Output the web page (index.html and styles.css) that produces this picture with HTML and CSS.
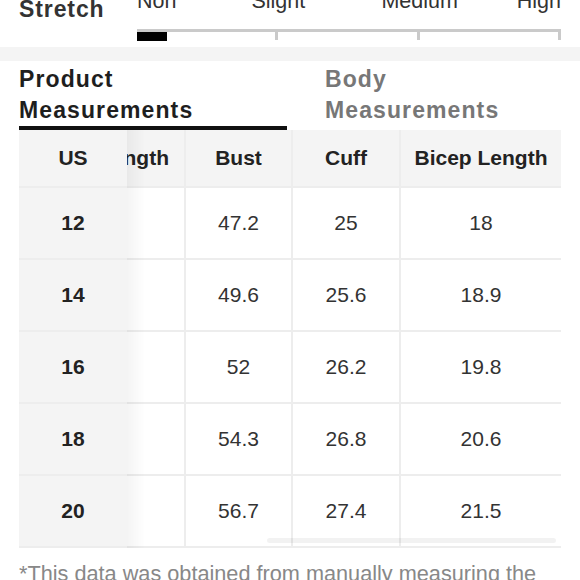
FILE: index.html
```html
<!DOCTYPE html>
<html lang="en">
<head>
<meta charset="utf-8">
<title>Size Guide</title>
<link rel="stylesheet" href="styles.css">
</head>
<body>
<div class="stretch">
  <div class="stretch-title">Stretch</div>
  <div class="scale">
    <div class="labels">
      <span class="label label-non">Non</span>
      <span class="label label-slight">Slight</span>
      <span class="label label-medium">Medium</span>
      <span class="label label-high">High</span>
    </div>
    <div class="track">
      <div class="seg"><div class="indicator"></div></div>
      <div class="seg"></div>
      <div class="seg"></div>
    </div>
  </div>
</div>
<div class="band"></div>
<div class="content">
  <div class="tabs">
    <div class="tab active">Product Measurements</div>
    <div class="tab">Body Measurements</div>
  </div>
  <div class="table-wrap">
    <div class="table-scroll">
      <table class="size-table">
        <colgroup>
          <col class="c-us"><col class="c-len"><col class="c-bust"><col class="c-cuff"><col class="c-bicep">
        </colgroup>
        <thead>
          <tr><th>US</th><th>Length</th><th class="ruled">Bust</th><th class="ruled">Cuff</th><th class="ruled">Bicep Length</th></tr>
        </thead>
        <tbody>
          <tr><td>12</td><td></td><td class="ruled">47.2</td><td class="ruled">25</td><td class="ruled">18</td></tr>
          <tr><td>14</td><td></td><td class="ruled">49.6</td><td class="ruled">25.6</td><td class="ruled">18.9</td></tr>
          <tr><td>16</td><td></td><td class="ruled">52</td><td class="ruled">26.2</td><td class="ruled">19.8</td></tr>
          <tr><td>18</td><td></td><td class="ruled">54.3</td><td class="ruled">26.8</td><td class="ruled">20.6</td></tr>
          <tr><td>20</td><td></td><td class="ruled">56.7</td><td class="ruled">27.4</td><td class="ruled">21.5</td></tr>
        </tbody>
      </table>
    </div>
    <div class="scroll-thumb"></div>
  </div>
  <p class="note">*This data was obtained from manually measuring the</p>
</div>
<script src="script.js"></script>
</body>
</html>
```

FILE: styles.css
```css
html, body {
  margin: 0;
  padding: 0;
}
body {
  width: 580px;
  height: 580px;
  overflow: hidden;
  background: #fff;
  font-family: "Liberation Sans", Arial, Helvetica, sans-serif;
  color: #222;
}

/* Stretch scale */
.stretch {
  display: flex;
  align-items: flex-start;
  padding: 0 19px;
  margin-top: -11px;
}
.stretch-title {
  width: 118px;
  margin-top: 7px;
  font-size: 23px;
  line-height: 27px;
  font-weight: 700;
  letter-spacing: 0.9px;
  color: #333;
}
.scale {
  width: 424px;
}
.labels {
  display: grid;
  grid-template-columns: repeat(6, 1fr);
  font-size: 21.5px;
  line-height: 24px;
  color: #333;
}
.label {
  white-space: nowrap;
}
.label-non { grid-column: 1; justify-self: start; }
.label-slight { grid-column: 2 / 4; justify-self: center; }
.label-medium { grid-column: 4 / 6; justify-self: center; }
.label-high { grid-column: 6; justify-self: end; }

.track {
  display: grid;
  grid-template-columns: repeat(3, 1fr);
  margin-top: 16px;
}
.seg {
  box-sizing: border-box;
  height: 11px;
  border-top: 3px solid #cacaca;
  border-right: 3px solid #cacaca;
}
.indicator {
  width: 30px;
  height: 9px;
  background: #000;
}

.band {
  height: 14px;
  margin-top: 7px;
  background: #f4f4f4;
}

/* Content */
.content {
  padding: 0 19px;
}
.tabs {
  display: grid;
  grid-template-columns: 268px 1fr;
  column-gap: 38px;
  margin-top: 3px;
}
.tab {
  font-size: 23px;
  line-height: 31px;
  font-weight: 700;
  letter-spacing: 1.1px;
  color: #777;
}
.tab.active {
  color: #1e1e1e;
  border-bottom: 4px solid #111;
}

.table-wrap {
  position: relative;
}
.table-scroll {
  overflow: hidden;
}
.size-table {
  table-layout: fixed;
  width: 585px;
  border-collapse: separate;
  border-spacing: 0;
  font-size: 21px;
}
.c-us { width: 108px; }
.c-len { width: 100px; }
.c-bust { width: 107px; }
.c-cuff { width: 108px; }
.c-bicep { width: 162px; }

.size-table th,
.size-table td {
  box-sizing: border-box;
  padding: 0;
  text-align: center;
  white-space: nowrap;
  border-bottom: 2px solid #ededed;
}
.size-table th {
  height: 58px;
  background: #f4f4f4;
  font-weight: 700;
  color: #222;
}
.size-table td {
  height: 72px;
  color: #333;
  background: #fff;
}
.size-table .ruled {
  border-left: 2px solid #ededed;
}
.size-table th:first-child,
.size-table td:first-child {
  position: sticky;
  left: 0;
  z-index: 1;
  background: #f4f4f4;
  font-weight: 700;
  color: #222;
}
.size-table th:first-child::after,
.size-table td:first-child::after {
  content: "";
  position: absolute;
  top: 0;
  bottom: -2px;
  left: 100%;
  width: 18px;
  background: linear-gradient(to right, rgba(0, 0, 0, 0.045), rgba(0, 0, 0, 0));
  pointer-events: none;
}

.scroll-thumb {
  position: absolute;
  left: 248px;
  right: 5px;
  bottom: 5px;
  height: 5px;
  border-radius: 3px;
  background: rgba(0, 0, 0, 0.05);
}

.note {
  margin: 13px 0 0;
  font-size: 21.7px;
  line-height: 26px;
  color: #888;
  white-space: nowrap;
}
```

FILE: script.js
```js
var scroller = document.querySelector('.table-scroll');
scroller.scrollLeft = scroller.scrollWidth;
```
